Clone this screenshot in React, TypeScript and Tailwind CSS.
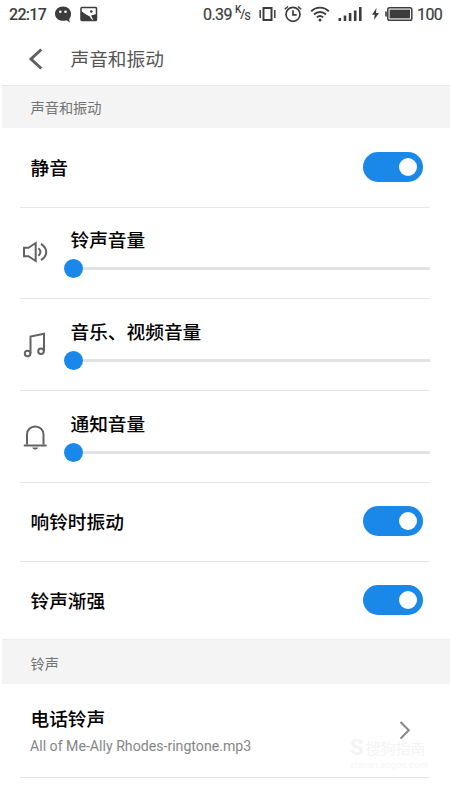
import React from "react";

const cjk = "font-['Noto_Sans_CJK_SC',sans-serif]";

function StatusBar() {
  return (
    <div className="flex h-7 items-center pl-[9px] text-[#3c3c3c] font-[Roboto,sans-serif]">
      <span className="w-[37px] whitespace-nowrap pt-px text-[16px] leading-7 tracking-[-0.7px] font-medium">22:17</span>
      <svg className="ml-2 shrink-0" width="18" height="18" viewBox="0 0 18 18">
        <path d="M9 1.500C4.400 1.500 1 4.700 1 8.700s3.400 7.100 8 7.100c1.400 0 2.500-.2 3.600-.6l3.200 2.400-.6-3.400C16.500 12.700 17 10.800 17 8.700 17 4.700 13.600 1.500 9 1.500Z" fill="#3c3c3c" />
        <circle cx="6.300" cy="6.700" r="1.300" fill="#fff" />
        <circle cx="11.500" cy="6.700" r="1.300" fill="#fff" />
      </svg>
      <svg className="ml-2 shrink-0" width="18" height="16" viewBox="0 0 18 16">
        <rect x="1" y="1.500" width="15.500" height="13" rx="1" fill="none" stroke="#3c3c3c" strokeWidth="1.500" />
        <path d="M1 5 6 8.500l3.500 1.800L12.500 14.500H1Z" fill="#3c3c3c" />
        <path d="M1 5l4.500 4.500 3.500 2L10 14.500H1ZM11 9.500l5.500-1.500v6.500h-3Z" fill="#3c3c3c" />
        <circle cx="11.300" cy="5.500" r="1.300" fill="#3c3c3c" />
      </svg>
      <span className="ml-[105px] w-[29px] whitespace-nowrap pt-px text-[16px] leading-7 tracking-[-0.6px] [-webkit-text-stroke:0.2px_#3c3c3c]">0.39</span>
      <span className="ml-[3px] flex h-5 w-[16px] text-[10px] leading-none font-medium">
        <span className="pt-[1px]">K</span>
        <span className="-ml-px pt-[3px] text-[13px]">/</span>
        <span className="-ml-px pt-[8px]">S</span>
      </span>
      <svg className="ml-[8px] shrink-0" width="17" height="16" viewBox="0 0 17 16">
        <path d="M1.200 4v8M15.800 4v8" stroke="#3c3c3c" strokeWidth="1.500" />
        <rect x="4.500" y="2" width="8" height="12" fill="none" stroke="#3c3c3c" strokeWidth="2" />
      </svg>
      <svg className="ml-2 shrink-0" width="18" height="18" viewBox="0 0 18 18" fill="none" stroke="#3c3c3c">
        <circle cx="9" cy="9.300" r="7" strokeWidth="1.700" />
        <path d="M9 5.200v4.600h3.700" strokeWidth="1.700" />
        <path d="M.8 4.300 4 1.400M17.200 4.300 14 1.400" strokeWidth="1.400" />
      </svg>
      <svg className="ml-2 shrink-0" width="20" height="16" viewBox="0 0 20 16" fill="none" stroke="#3c3c3c" strokeWidth="1.900">
        <path d="M1.200 5.300c5-4.900 12.600-4.900 17.600 0M4 8.500c3.500-3.300 8.500-3.300 12 0M6.800 11.400c2-1.700 4.400-1.700 6.400 0" />
        <circle cx="10" cy="14" r="1.500" fill="#3c3c3c" stroke="none" />
      </svg>
      <svg className="ml-2 shrink-0" width="24" height="16" viewBox="0 0 24 16" stroke="#3c3c3c" strokeWidth="2.600">
        <path d="M1.800 12v3M7 9.500V15M12.100 7v8M17.200 4.500V15M22.300 1v14" />
      </svg>
      <svg className="ml-[9px] shrink-0" width="9" height="14" viewBox="0 0 9 14">
        <path d="M5.500 1 1 7.800h2.700L3 13l5-7H5Z" fill="#3c3c3c" />
      </svg>
      <svg className="ml-[5px] shrink-0" width="28" height="16" viewBox="0 0 28 16">
        <path d="M1 5.500v5" stroke="#3c3c3c" strokeWidth="1.600" />
        <rect x="2.800" y="1.800" width="24" height="12.400" rx="1.800" fill="none" stroke="#3c3c3c" strokeWidth="1.500" />
        <rect x="4.600" y="3.600" width="20.400" height="8.800" fill="#3c3c3c" />
      </svg>
      <span className="ml-[4px] pt-px text-[16px] leading-7 tracking-[-0.6px] [-webkit-text-stroke:0.2px_#3c3c3c]">100</span>
    </div>
  );
}

function Divider() {
  return <div className="ml-5 mr-5 h-px shrink-0 bg-[#e6e6e6]" />;
}

function SectionTitle({ children, className }: { children: React.ReactNode; className: string }) {
  return (
    <div className={`ml-[2px] flex items-center bg-[#f4f4f4] pl-[28.500px] text-[14.200px] text-[#737373] ${className}`}>{children}</div>
  );
}

function Toggle() {
  return (
    <button type="button" role="switch" aria-checked="true" className="flex h-[30px] w-[60px] items-center justify-end rounded-full bg-[#1a88e9] pr-[6px]">
      <span className="size-[18px] rounded-full bg-white" />
    </button>
  );
}

function ToggleRow({ label, className }: { label: string; className: string }) {
  return (
    <div className={`flex items-center justify-between pl-[30.500px] pr-[27px] ${className}`}>
      <span className="text-[18.700px] leading-7 font-medium text-black">{label}</span>
      <Toggle />
    </div>
  );
}

function VolumeRow({ label, icon, className }: { label: string; icon: React.ReactNode; className: string }) {
  return (
    <div className={`flex pl-[22px] pr-[20px] ${className}`}>
      <div className="mt-[8px] flex h-7 w-[26px] justify-center">{icon}</div>
      <div className="ml-[15.500px] flex flex-1 flex-col">
        <span className="-mt-[5px] pl-[7px] text-[18.700px] leading-7 font-medium text-black">{label}</span>
        <div className="mt-[6px] flex h-[19px] items-center">
          <span className="size-[19px] rounded-full bg-[#1a88e9]" />
          <span className="h-[3px] flex-1 bg-[#e2e2e2]" />
        </div>
      </div>
    </div>
  );
}

const speaker = (
  <svg width="26" height="28" viewBox="0 0 26 28" fill="none" stroke="#626262" strokeWidth="2">
    <path d="M2 9.800h4.500L13.700 5v18l-7.200-4.800H2Z" />
    <path d="M16.300 10.300c2.800 2 2.800 5.400 0 7.400M19 5.800c7 4.600 7 11.800 0 16.400" />
  </svg>
);

const music = (
  <svg width="26" height="28" viewBox="0 0 26 28" fill="none" stroke="#626262" strokeWidth="2">
    <circle cx="5.600" cy="23.500" r="2.800" />
    <circle cx="19" cy="21.200" r="2.800" />
    <path d="M8.500 23.500V6.500L22 3.800v17.400" />
  </svg>
);

const bell = (
  <svg width="26" height="28" viewBox="0 0 26 28" fill="none" stroke="#626262" strokeWidth="2">
    <path d="M5 22.500V12.600C5 7.900 8.500 4.600 13.200 4.600s8.300 3.300 8.300 8v9.900" />
    <path d="M1.800 23.500h22.800" strokeWidth="2" />
    <path d="M10.300 25.500h5.800c-.8 2.800-5 2.800-5.800 0Z" fill="#626262" stroke="none" />
  </svg>
);

export default function App() {
  return (
    <main className={`flex h-[800px] w-[450px] flex-col overflow-hidden bg-white ${cjk}`}>
      <StatusBar />
      <header className="flex h-[57px] items-center pb-px pl-7 pt-[6px]">
        <svg className="shrink-0" width="16" height="24" viewBox="0 0 16 24" fill="none" stroke="#5f5f5f" strokeWidth="3">
          <path d="M13.300 2.500 3 12l10.300 9.500" />
        </svg>
        <h1 className="-mt-[2px] ml-[26.500px] text-[18.700px] leading-7 text-[#555]">声音和振动</h1>
      </header>
      <div className="ml-[2px] h-px bg-[#e7e7e7]" />
      <SectionTitle className="h-[42px] pt-px">声音和振动</SectionTitle>
      <ToggleRow label="静音" className="h-[79px] pb-[2px]" />
      <Divider />
      <VolumeRow label="铃声音量" icon={speaker} className="h-[90px] pt-[22px]" />
      <Divider />
      <VolumeRow label="音乐、视频音量" icon={music} className="h-[91px] pt-[23px]" />
      <Divider />
      <VolumeRow label="通知音量" icon={bell} className="h-[91px] pt-[23px]" />
      <Divider />
      <ToggleRow label="响铃时振动" className="h-[78px] pb-[2px]" />
      <Divider />
      <ToggleRow label="铃声渐强" className="h-[77px] pb-px" />
      <SectionTitle className="h-[45px] border-t border-[#ededed] pt-[3px]">铃声</SectionTitle>
      <div className="flex h-[93px] pl-[30px]">
        <div className="w-[320px] pt-5">
          <div className="pl-[0.500px] text-[18.700px] leading-7 font-medium text-black">电话铃声</div>
          <div className="mt-[4px] text-[14.150px] leading-5 text-[#858585] font-[Roboto,sans-serif]">All of Me-Ally Rhodes-ringtone.mp3</div>
        </div>
        <div className="flex w-[80px] flex-col pt-[36px]">
          <svg className="ml-[48px] shrink-0" width="14" height="21" viewBox="0 0 14 21" fill="none" stroke="#858585" strokeWidth="2">
            <path d="m2.500 2 8.300 8.300-8.300 8.300" />
          </svg>
          <div className="-mt-[3px] flex h-[20px] items-center whitespace-nowrap text-[#f4f4f4]">
            <span className="text-[22px] leading-5 font-bold font-[Roboto,sans-serif]">S</span>
            <span className="ml-[2px] text-[15px] leading-5">搜狗指南</span>
          </div>
          <div className="mt-px whitespace-nowrap text-[9.500px] leading-3 text-[#f5f5f5] font-[Roboto,sans-serif]">zhinan.sogou.com</div>
        </div>
      </div>
      <Divider />
    </main>
  );
}
